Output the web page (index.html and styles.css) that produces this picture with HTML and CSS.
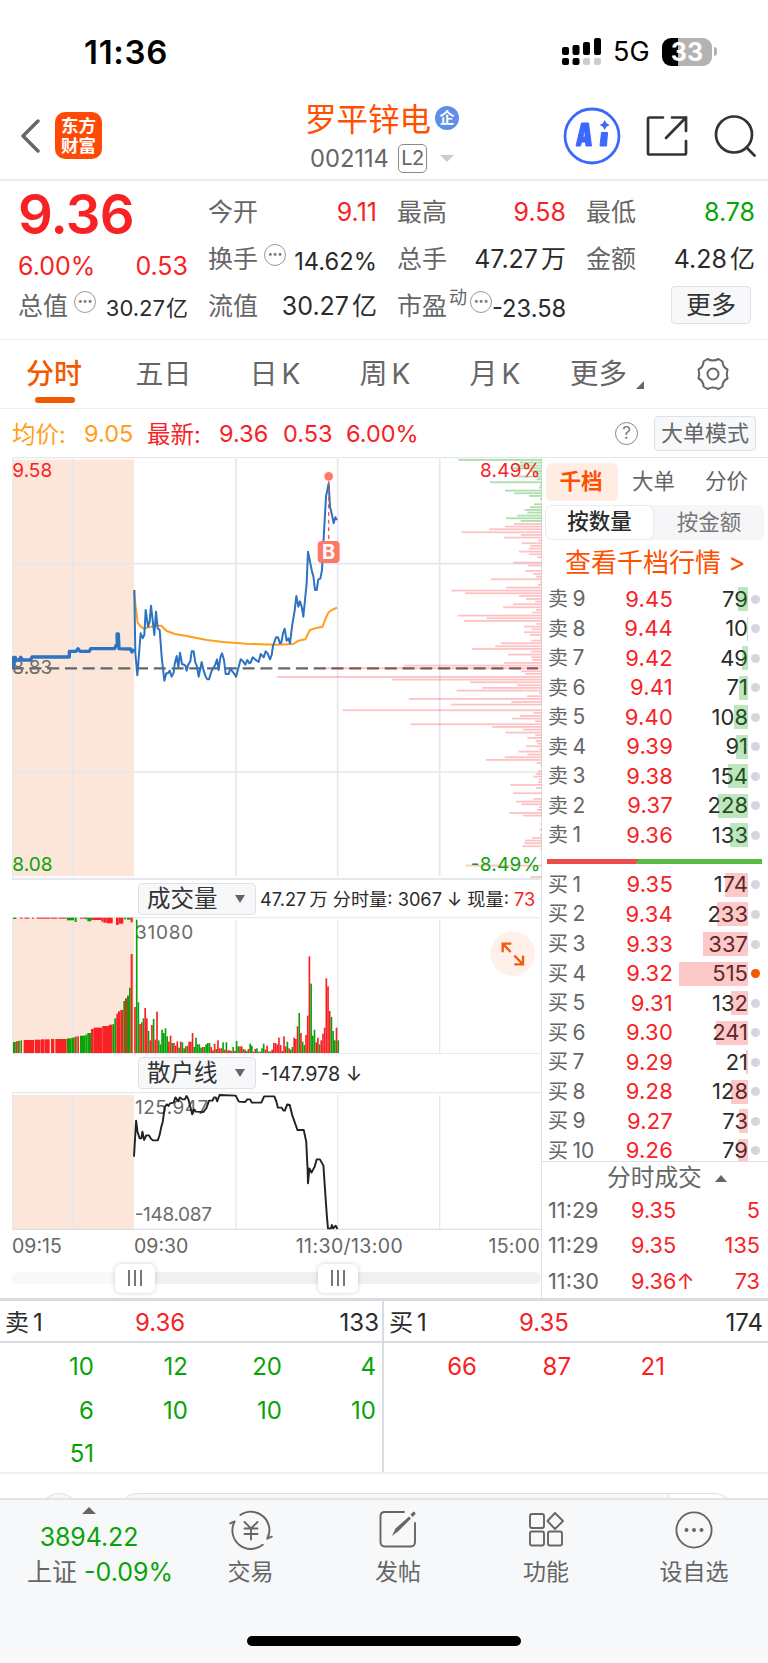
FILE: index.html
```html
<!DOCTYPE html>
<html lang="zh-CN">
<head>
  <meta charset="UTF-8" />
  <meta name="viewport" content="width=device-width, initial-scale=1.0"/>
  <title>罗平锌电 002114</title>
  <link rel="stylesheet" href="styles.css">
</head>
<body>
  <div class="status">
    <span class="clock">11:36</span>
    <svg class="signal" width="39" height="28" viewBox="0 0 39 28">
      <g fill="#000">
        <rect x="0" y="9" width="7" height="8" rx="2"/>
        <rect x="10.5" y="7" width="7" height="10" rx="2"/>
        <rect x="21" y="4" width="7" height="13" rx="2"/>
        <rect x="32" y="0" width="7" height="17" rx="2"/>
        <rect x="0" y="20" width="7" height="7" rx="2"/>
        <rect x="10.5" y="20" width="7" height="7" rx="2"/>
      </g>
      <g fill="#ccc">
        <rect x="21" y="20" width="7" height="7" rx="2"/>
        <rect x="32" y="20" width="7" height="7" rx="2"/>
      </g>
    </svg>
    <span class="net">5G</span>
    <span class="battery">33</span>
    <span class="battery-tip"></span>
  </div>

  <header class="header">
    <svg class="back" width="20" height="34" viewBox="0 0 20 34"><path d="M18 2 L3 17 L18 32" fill="none" stroke="#666" stroke-width="3.4" stroke-linecap="round" stroke-linejoin="round"/></svg>
    <div class="logo">东方<br/>财富</div>
    <div class="title">
      <div class="name">罗平锌电<span class="badge">企</span></div>
      <div class="code"><span>002114</span><span class="l2">L2</span><i class="caret"></i></div>
    </div>
    <svg class="ai" width="58" height="58" viewBox="0 0 58 58">
      <circle cx="29" cy="29" r="27" fill="#fff" stroke="#3b68ff" stroke-width="2.8"/>
      <path d="M13 39 L18.500 16 H25.500 L28.500 39 H23 L22.500 35 H18.500 L17.500 39 Z M19.800 30 H22.200 L21.800 22.500 Z" fill="#3b68ff" fill-rule="evenodd" stroke="#3b68ff" stroke-linejoin="round"/>
      <path d="M38.500 25.500 H44.500 L43.500 39 H37 Z" fill="#3b68ff" stroke="#3b68ff" stroke-linejoin="round"/>
      <path d="M41.700 13 L43.500 16.200 L46.700 18 L43.500 19.800 L41.700 23 L39.900 19.800 L36.700 18 L39.900 16.200 Z" fill="#3b68ff"/>
    </svg>
    <svg class="share" width="42" height="42" viewBox="0 0 42 42"><path d="M17 2.500 H3.500 Q2 2.500 2 4 V38 Q2 39.500 3.500 39.500 H38.500 Q40 39.500 40 38 V26 M26 2.500 H40 V16 M40 2.500 L20 23" fill="none" stroke="#333" stroke-width="2.700" stroke-linecap="round"/></svg>
    <svg class="search" width="43" height="42" viewBox="0 0 43 42"><circle cx="20" cy="19.500" r="18" fill="none" stroke="#333" stroke-width="2.700"/><path d="M32.500 32.500 L40.500 40.500" stroke="#333" stroke-width="2.700" stroke-linecap="round"/></svg>
  </header>

  <section class="quote">
    <div class="col first">
      <div class="price">9.36</div>
      <div class="cell red"><span>6.00%</span><span>0.53</span></div>
      <div class="cell"><label>总值<i class="more-dot">•••</i></label><b class="mid">30.27<u>亿</u></b></div>
    </div>
    <div class="col">
      <div class="cell"><label>今开</label><b class="red">9.11</b></div>
      <div class="cell"><label>换手<i class="more-dot">•••</i></label><b class="mid2">14.62%</b></div>
      <div class="cell"><label>流值</label><b>30.27<u>亿</u></b></div>
    </div>
    <div class="col">
      <div class="cell"><label>最高</label><b class="red">9.58</b></div>
      <div class="cell"><label>总手</label><b>47.27<u>万</u></b></div>
      <div class="cell"><label>市盈<sup>动</sup><i class="more-dot tight">•••</i></label><b class="mid2">-23.58</b></div>
    </div>
    <div class="col">
      <div class="cell"><label>最低</label><b class="green">8.78</b></div>
      <div class="cell"><label>金额</label><b>4.28<u>亿</u></b></div>
      <div class="cell end"><button class="more-btn">更多</button></div>
    </div>
  </section>

  <nav class="tabs">
    <a class="active">分时</a>
    <a>五日</a>
    <a>日<u>K</u></a>
    <a>周<u>K</u></a>
    <a>月<u>K</u></a>
    <a class="more">更多</a>
    <svg class="gear" width="34" height="34" viewBox="0 0 34 34"><g fill="none" stroke="#666" stroke-width="2"><path d="M11.500 2 Q17 5 22.500 2 L26.500 4.500 Q26.500 10 31.500 12.500 Q30 17 31.500 21.500 Q26.500 24 26.500 29.500 L22.500 32 Q17 29 11.500 32 L7.500 29.500 Q7.500 24 2.500 21.500 Q4 17 2.500 12.500 Q7.500 10 7.500 4.500 Z" stroke-linejoin="round"/><circle cx="17" cy="17" r="5.500"/></g></svg>
  </nav>

  <div class="info">
    <span class="avg">均价:</span><span class="avg v1">9.05</span>
    <span class="red v2">最新:</span><span class="red v3">9.36</span><span class="red v4">0.53</span><span class="red">6.00%</span>
    <span class="help">?</span>
    <button class="mode-btn">大单模式</button>
  </div>

  <main class="main">
    <div class="charts">
      <!-- price -->
      <svg class="chart" width="530" height="423" viewBox="36 51 1590 1269">
        <rect x="38" y="59" width="364" height="1250" fill="#fce6da"/>
        <g stroke="#e4e7ed" fill="none">
          <path d="M36 53 H1626" stroke-width="4"/>
          <path d="M38 53 V1318" stroke-width="3"/>
          <path d="M219 57 V1309 M708 57 V1309 M1013 57 V1309 M1319 57 V1309" stroke-width="5"/>
          <path d="M38 371 H1624 M38 996 H1624" stroke-width="5"/>
          <path d="M36 1317 H1626" stroke-width="6"/>
        </g>
        <path d="M35 685 H1614" stroke="#666" stroke-width="7" stroke-dasharray="36 17.300"/>
        <g id="profile"></g>
        <g class="label">
          <text x="37" y="111" class="fill-red">9.58</text>
          <text x="37" y="702">8.83</text>
          <text x="37" y="1293" class="fill-green">8.08</text>
          <text x="1621" y="111" class="fill-red" text-anchor="end" textLength="181">8.49%</text>
          <text x="1621" y="1293" class="fill-green" text-anchor="end" textLength="209">-8.49%</text>
        </g>
        <g fill="none" stroke-linejoin="round">
          <polyline stroke="#ff9f1a" stroke-width="6" points="402,450 407,500 413,548 422,560 432,566 445,562 470,557 484,557 491,564 500,573 525,582 560,588 620,600 670,606 740,611 830,614 880,612 895,602 916,598 922,585 930,570 945,565 968,560 975,540 985,518 995,510 1011,503"/>
          <polyline stroke="#2e72c2" stroke-width="10" points="41,684 41,652 46,652 46,660 58,660 62,652 68,660 92,660 96,651 208,651 208,634 228,634 234,626 240,634 268,634 272,626 344,626 348,616 352,616 351,582 355,582 357,626 392,627 396,636 403,628"/>
          <polyline stroke="#2e72c2" stroke-width="6" points="403,450 406,640 412,706 418,630 422,580 428,594 433,585 437,510 444,560 449,545 453,497 463,585 468,515 473,565 479,570 485,650 493,722 499,700 504,700 509,692 515,710 521,698 524,672 530,648 535,682 540,638 546,672 556,676 560,692 564,676 571,664 575,634 581,634 586,668 590,676 596,710 605,666 611,692 617,710 622,718 627,718 635,692 645,676 651,658 656,690 661,652 666,640 672,660 677,702 686,702 691,685 697,694 702,700 708,710 713,692 722,658 729,664 736,674 742,660 748,670 752,668 758,652 765,658 776,666 782,642 791,652 797,634 803,640 810,658 815,645 819,618 828,592 834,592 840,610 844,608 849,580 854,566 860,602 865,595 870,610 876,560 884,512 889,468 895,500 900,484 905,500 910,530 915,480 920,430 924,335 930,365 936,395 940,408 945,450 950,450 955,418 961,416 966,390 969,330 974,240 978,170 982,150 986,130 990,200 996,225 1001,250 1006,232 1011,240"/>
        </g>
        <path d="M986 124 V300" stroke="#ff4d40" stroke-width="4" stroke-dasharray="12 11"/>
        <circle cx="986" cy="109" r="13" fill="#ff7a66"/>
        <rect x="953" y="303" width="66" height="66" rx="12" fill="#ff7a66"/>
        <text x="986" y="358" class="buy" text-anchor="middle">B</text>
      </svg>

      <div class="sub-head">
        <button class="select">成交量<i class="caret"></i></button>
        <span class="sub-text small">47.27<u>万</u> 分时量: 3067 ↓ 现量: <em class="red">73</em></span>
      </div>

      <!-- volume -->
      <svg class="chart" width="530" height="137" viewBox="36 141 1590 411">
        <rect x="38" y="144" width="364" height="406" fill="#fce6da"/>
        <g stroke="#e4e7ed" fill="none">
          <path d="M36 143 H1626" stroke-width="3"/>
          <path d="M38 143 V550" stroke-width="3"/>
          <path d="M219 150 V550 M708 150 V550 M1013 150 V550 M1319 150 V550" stroke-width="4"/>
          <path d="M36 551 H1626" stroke-width="3"/>
        </g>
        <g class="label"><text x="405" y="207" textLength="175">31080</text></g>
        <g id="volume"></g>
        <circle cx="1538" cy="251" r="67" fill="#fff0e9"/>
        <path d="M1508 247 V221 H1534 M1508 221 L1532 246 M1543 283 H1569 V257 M1543 257 L1568 282" fill="none" stroke="#f25a0c" stroke-width="7"/>
      </svg>

      <div class="sub-head second">
        <button class="select">散户线<i class="caret"></i></button>
        <span class="sub-text">-147.978 ↓</span>
      </div>

      <!-- retail line -->
      <svg class="chart" width="530" height="138" viewBox="36 96 1590 414">
        <rect x="38" y="105" width="364" height="403" fill="#fce6da"/>
        <g stroke="#e4e7ed" fill="none">
          <path d="M36 98 H1626" stroke-width="4"/>
          <path d="M38 98 V508" stroke-width="3"/>
          <path d="M219 105 V508 M708 105 V508 M1013 105 V508 M1319 105 V508" stroke-width="4"/>
          <path d="M36 508 H1626" stroke-width="4" stroke="#dcdfe8"/>
        </g>
        <g class="label">
          <text x="405" y="163" textLength="220">125.947</text>
          <text x="404" y="482" textLength="232">-148.087</text>
        </g>
        <polyline transform="scale(1.0523 1)" fill="none" stroke="#222" stroke-width="5.5" stroke-linejoin="round" points="382,290 388,182 392,215 398,235 403,235 406,215 411,240 417,226 425,226 430,236 436,241 450,241 455,225 460,200 464,185 470,140 476,133 480,138 485,130 495,128 500,112 508,124 513,112 520,118 527,118 532,108 537,118 548,163 553,148 558,155 580,156 588,145 596,122 606,122 610,112 615,112 619,124 626,105 672,107 681,125 699,126 705,118 713,118 718,128 745,128 753,109 782,109 788,125 792,143 803,143 808,152 812,152 819,133 826,135 833,165 838,180 848,210 866,210 873,245 877,330 878,370 882,325 888,338 897,320 903,298 912,298 922,317 928,410 932,470 935,505 944,505 946,495 950,505 957,497 962,507"/>
      </svg>

      <div class="times">
        <span>09:15</span><span>09:30</span><span class="noon">11:30/13:00</span><span class="last">15:00</span>
      </div>
      <div class="slider">
        <div class="handle"><i></i><i></i><i></i></div>
        <div class="handle"><i></i><i></i><i></i></div>
      </div>
    </div>

    <aside class="book">
      <div class="book-tabs"><a class="active">千档</a><a>大单</a><a>分价</a></div>
      <div class="toggle"><a class="active">按数量</a><a>按金额</a></div>
      <a class="all-link">查看千档行情 &gt;</a>
      <div class="levels" id="sell"></div>
      <div class="ratio"></div>
      <div class="levels buy-levels" id="buy"></div>
      <div class="deal-head">分时成交<i class="caret up"></i></div>
      <div class="deals">
        <div><span>11:29</span><b>9.35</b><b>5</b></div>
        <div><span>11:29</span><b>9.35</b><b>135</b></div>
        <div><span>11:30</span><b>9.36↑</b><b>73</b></div>
      </div>
    </aside>
  </main>

  <section class="queue">
    <div class="side">
      <div class="queue-head"><span>卖<u>1</u></span><span class="red">9.36</span><span>133</span></div>
      <div class="orders green">
        <span>10</span><span>12</span><span>20</span><span>4</span>
        <span>6</span><span>10</span><span>10</span><span>10</span>
        <span>51</span>
      </div>
    </div>
    <div class="side">
      <div class="queue-head"><span>买<u>1</u></span><span class="red">9.35</span><span>174</span></div>
      <div class="orders red"><span>66</span><span>87</span><span>21</span></div>
    </div>
  </section>

  <div class="peek">
    <div class="peek-round"></div>
    <div class="peek-pill"><i></i></div>
  </div>

  <footer class="bottom">
    <div class="index">
      <i class="caret up"></i>
      <div class="green">3894.22</div>
      <div>上证<span class="green">-0.09%</span></div>
    </div>
    <a>
      <svg width="44" height="40" viewBox="0 0 44 40"><g fill="none" stroke="#666" stroke-width="1.900" stroke-linecap="round" stroke-linejoin="round"><path d="M11.300 5 A18.500 18.500 0 0 1 38.300 28.700 L42.800 26.700 M38.300 28.700 L39.500 24.500"/><path d="M33.700 34.700 A18.500 18.500 0 0 1 5.700 11.500 L1.200 13.300"/><path d="M15.500 12 L22 18.500 L28.500 12 M22 18.500 V29.500 M15.500 18.500 H28.500 M15.500 24 H28.500"/></g></svg>
      交易
    </a>
    <a>
      <svg width="40" height="40" viewBox="0 0 40 40"><g fill="none" stroke="#666" stroke-width="1.900" stroke-linecap="round"><path d="M26 2 H7 Q2.500 2 2.500 6 V32 Q2.500 36.500 7 36.500 H32.500 Q37 36.500 37 32 V13"/></g><path d="M14 26 L17.500 18.500 L31 6.500 L33 8.500 L20.500 21 Z M32.500 4.500 L35.500 1.500 Q38 2.500 37.500 4 L34.500 7 Z" fill="#666"/></svg>
      发帖
    </a>
    <a>
      <svg width="40" height="40" viewBox="0 0 40 40"><g fill="none" stroke="#666" stroke-width="1.900"><rect x="4" y="4" width="14" height="14" rx="2"/><rect x="4" y="21.5" width="14" height="14" rx="2"/><rect x="22" y="21.5" width="14" height="14" rx="2"/><path d="M29 3 L37 11 L29 19 L21.500 11 Z" stroke-linejoin="round"/></g></svg>
      功能
    </a>
    <a>
      <svg width="40" height="40" viewBox="0 0 40 40"><circle cx="20" cy="20" r="17.600" fill="none" stroke="#666" stroke-width="1.900"/><g fill="#666"><circle cx="12.500" cy="20" r="2"/><circle cx="20" cy="20" r="2"/><circle cx="27.500" cy="20" r="2"/></g></svg>
      设自选
    </a>
    <div class="home-bar"></div>
  </footer>

  <script>
    const RED = '#f82225';
    const GREEN = '#09a309';

    // [name, price, volume, bar width]
    const sells = [
      ['卖9', '9.45', 79, 10], ['卖8', '9.44', 10, 1], ['卖7', '9.42', 49, 6],
      ['卖6', '9.41', 71, 9], ['卖5', '9.40', 108, 14], ['卖4', '9.39', 91, 12],
      ['卖3', '9.38', 154, 20], ['卖2', '9.37', 228, 30], ['卖1', '9.36', 133, 18]
    ];
    const buys = [
      ['买1', '9.35', 174, 23], ['买2', '9.34', 233, 31], ['买3', '9.33', 337, 45],
      ['买4', '9.32', 515, 69], ['买5', '9.31', 132, 17], ['买6', '9.30', 241, 32],
      ['买7', '9.29', 21, 2], ['买8', '9.28', 128, 17], ['买9', '9.27', 73, 9],
      ['买10', '9.26', 79, 10]
    ];

    // [y, left edge] of every price level
    const profile = [
      [60,475],[68,660],[77,648],[85,640],[93,690],[101,700],[110,655],[118,710],[127,570],[135,720],[143,717],
      [152,615],[160,642],[168,687],[177,720],[193,702],[202,690],[210,674],[218,682],[227,652],[235,618],[243,662],
      [252,642],[260,615],[268,567],[277,485],[285,662],[293,612],[302,714],[310,665],[318,690],[326,686],[335,657],
      [343,686],[352,712],[368,639],[377,684],[393,675],[402,699],[410,708],[418,573],[427,720],[435,714],[443,618],
      [452,454],[460,495],[468,657],[477,678],[485,705],[493,639],[502,609],[510,708],[518,697],[527,473],[535,560],
      [543,492],[552,709],[560,672],[568,694],[577,672],[585,690],[594,720],[602,694],[610,602],[619,585],[627,516],
      [635,693],[644,625],[652,693],[660,697],[669,612],[677,311],[685,68],[694,664],[702,675],[711,-70],[719,276],
      [727,510],[736,651],[744,546],[752,470],[760,717],[769,681],[777,327],[786,634],[794,453],[811,128],[819,700],
      [828,660],[836,635],[844,705],[853,332],[861,577],[869,669],[878,616],[886,705],[894,682],[903,707],[911,711],
      [919,678],[927,718],[935,655],[944,682],[952,614],[960,558],[969,710],[977,722],[994,715],[1002,709],[1010,700],
      [1019,717],[1027,714],[1035,631],[1044,708],[1060,639],[1077,700],[1085,647],[1093,665],[1102,717],[1110,711],
      [1119,627],[1127,669],[1152,722],[1169,718],[1185,720],[1194,697],[1202,675],[1210,673],[1219,667],[1227,722],
      [1277,497],[1311,692]
    ];

    // call auction, [x, width, height, colour]
    const auction = [
      [39,8,33,'g'],[47,5,35,'r'],[52,6,36,'g'],[58,3,37,'r'],[62,4,38,'g'],[71,31,39,'r'],[104,18,40,'r'],[123,9,41,'r'],
      [133,16,41,'r'],[153,10,42,'r'],[166,34,42,'r'],[201,13,44,'g'],[214,10,46,'g'],[224,5,49,'r'],[229,2,50,'g'],[232,5,50,'r'],
      [240,16,52,'g'],[256,6,55,'g'],[262,11,60,'g'],[273,8,72,'r'],[281,26,76,'r'],[307,20,81,'r'],[327,11,85,'r'],
      [338,5,87,'g'],[343,6,104,'g'],[349,5,118,'r'],[354,7,125,'r'],[361,9,129,'r'],[370,5,156,'g'],[375,6,164,'r'],
      [381,6,172,'g'],[387,5,196,'g'],[392,6,297,'r']
    ];
    const unmatched = [
      [39,10,4,'g'],[60,8,3,'r'],[74,14,3,'r'],[96,6,3,'r'],[110,40,3,'r'],[152,20,3,'r'],[176,24,3,'r'],[201,21,8,'g'],[224,6,13,'g'],
      [240,20,3,'r'],[256,6,5,'g'],[262,12,11,'g'],[274,30,7,'r'],[304,6,12,'r'],[310,10,15,'r'],[320,18,17,'r'],[348,8,22,'r'],[356,14,18,'r'],
      [372,6,5,'g'],[381,11,6,'g'],[392,6,14,'r']
    ];
    const session = ('r138 g400 g152 r87 r92 g104 r135 r104 g66 r38 r84 g102 r40 r124 g38 g26 g70 g60 g74 g50 ' +
      'r34 r52 g30 r30 r22 r35 g16 r34 g32 g14 r20 g22 r34 r34 r60 g18 g46 g26 g26 g16 ' +
      'r18 g18 g26 g30 g30 r18 r8 r28 g12 r38 r14 r14 g32 r10 g32 r8 r8 r6 g18 r6 ' +
      'g36 g20 r20 r20 g12 r10 g6 r12 g28 g22 r4 r12 g14 g4 r4 g14 g28 r10 r22 g5 ' +
      'g5 r10 r30 r30 r26 r46 r24 r6 r50 r20 g34 r14 g10 g18 r46 r42 r80 g120 r60 g34 ' +
      'g24 r54 r112 r290 g208 g52 g70 r32 r46 g26 r38 r58 r76 r224 r200 r126 g108 g66 g38 r76 g38').split(' ');

    function rect(x, y, w, h, fill) {
      return `<rect x="${x}" y="${y}" width="${w}" height="${h}" fill="${fill}"/>`;
    }

    function renderLevels(id, rows) {
      document.getElementById(id).innerHTML = rows.map(([name, price, vol, w]) => `
        <div class="level">
          <span class="who">${name[0]}<u>${name.slice(1)}</u></span>
          <b>${price}</b>
          <span class="vol"><i class="bar" style="width:${w}px"></i>${vol}</span>
          <i class="dot${vol === 515 ? ' hot' : ''}"></i>
        </div>`).join('');
    }

    function renderProfile() {
      document.getElementById('profile').innerHTML = profile.map(([y, left]) =>
        rect(900 + left, y - 3, 725 - left, 5.5, y < 248 ? 'rgba(20,165,20,.35)' : 'rgba(248,34,37,.27)')).join('');
    }

    function renderVolume() {
      const color = c => c === 'r' ? RED : GREEN;
      let html = auction.map(([x, w, h, c]) => rect(x, 549 - h, w, h, color(c))).join('');
      html += unmatched.map(([x, w, h, c]) => rect(x, 143, w, h, color(c))).join('');
      session.forEach((s, i) => {
        const h = +s.slice(1);
        html += rect((402.5 + i * 5.08).toFixed(2), 549 - h, 5, h, color(s[0]));
      });
      document.getElementById('volume').innerHTML = html;
    }

    renderLevels('sell', sells);
    renderLevels('buy', buys);
    renderProfile();
    renderVolume();
  </script>
</body>
</html>
```
FILE: styles.css
```css
* {
  box-sizing: border-box;
}

body {
  margin: 0;
  width: 768px;
  height: 1663px;
  overflow: hidden;
  background: #fff;
  color: #2b2b2b;
  font-family: Inter, "Noto Sans CJK SC", sans-serif;
  font-size: 24px;
}

i, em, u {
  font-style: normal;
  text-decoration: none;
}

b {
  font-weight: normal;
}

button {
  font-family: inherit;
  color: #333;
  background: #f7f8fa;
  border: 1.5px solid #dfe1e6;
  border-radius: 4px;
  padding: 0;
}

.red { color: #f82225; }
.green { color: #09a309; }

.caret {
  display: inline-block;
  border: 6px solid transparent;
  border-top: 8px solid #666;
  border-bottom: 0;
}

.caret.up {
  border-top: 0;
  border-bottom: 7px solid #666;
}

/* status bar */
.status {
  height: 92px;
  display: flex;
  align-items: center;
  padding: 11px 0 0 84px;
  color: #000;
}

.clock {
  width: 478px;
  font-size: 33px;
  font-weight: 600;
  letter-spacing: .7px;
}

.net {
  margin-left: 12px;
  width: 49px;
  font-size: 27px;
}

.battery {
  width: 50px;
  height: 28px;
  border-radius: 9px;
  background: linear-gradient(90deg, #000 33%, #b3b3b3 33%);
  color: #fff;
  font-size: 25px;
  font-weight: 700;
  line-height: 28px;
  text-align: center;
}

.battery-tip {
  margin-left: 2px;
  width: 3px;
  height: 9px;
  border-radius: 0 3px 3px 0;
  background: #b3b3b3;
}

/* header */
.header {
  height: 89px;
  display: flex;
  align-items: center;
  border-bottom: 2px solid #ececee;
}

.back {
  margin-left: 20px;
}

.logo {
  margin-left: 15px;
  width: 47px;
  height: 47px;
  padding-top: 4px;
  border-radius: 10px;
  background: #ff4a05;
  color: #fff;
  font-size: 17.5px;
  font-weight: 700;
  line-height: 19.5px;
  text-align: center;
}

.title {
  margin-left: 203px;
  width: 258px;
  padding-top: 4px;
}

.name {
  display: flex;
  align-items: center;
  height: 41px;
  color: #ff5000;
  font-size: 31.5px;
}

.badge {
  margin: 2px 0 0 4px;
  width: 24px;
  height: 24px;
  border-radius: 50%;
  background: #5f8ee8;
  color: #fff;
  font-size: 15px;
  font-weight: 700;
  line-height: 23px;
  text-align: center;
}

.code {
  display: flex;
  align-items: center;
  height: 42px;
  padding-left: 5px;
  color: #666;
  font-size: 23.7px;
}

.l2 {
  margin-left: 9px;
  width: 29px;
  height: 29px;
  border: 1.5px solid #8a8a8a;
  border-radius: 5px;
  font-size: 20px;
  letter-spacing: -.5px;
  line-height: 27px;
  text-align: center;
}

.code .caret {
  margin-left: 13px;
  border-width: 7px 7px 0;
  border-top-color: #ccc;
}

.share {
  margin-left: 25px;
}

.search {
  margin-left: 26px;
}

/* quote */
.quote {
  height: 159px;
  display: flex;
  justify-content: space-between;
  padding: 8px 13px 0 18px;
  border-bottom: 1.5px solid #f0f0f2;
}

.col {
  width: 170px;
}

.col:nth-child(n + 2) {
  padding-left: 1px;
}

.price {
  height: 54px;
  color: #f82225;
  font-size: 54.5px;
  font-weight: 600;
  line-height: 51px;
  letter-spacing: -.8px;
}

.cell {
  height: 47px;
  display: flex;
  align-items: center;
  justify-content: space-between;
  font-size: 25px;
  line-height: 47px;
  white-space: nowrap;
}

.first .cell {
  height: 40px;
  padding-top: 6px;
}

.first .cell + .cell {
  height: 47px;
  padding-top: 0;
}

.cell.end {
  justify-content: flex-end;
  padding: 0 4px 4px 0;
}

.cell label {
  display: flex;
  align-items: center;
  color: #666;
}

.cell b { font-size: 25px; }
.cell b.mid { font-size: 22px; padding-top: 4px; }
.cell b.mid2 { font-size: 23.7px; padding-top: 3px; }
.cell u { margin-left: 3px; }
.cell .mid u { margin-left: 1px; }

.cell sup {
  margin: 0 0 17px 2px;
  font-size: 18px;
  line-height: 20px;
}

.more-dot {
  margin: 0 0 10px 6px;
  width: 22px;
  height: 22px;
  border: 1.7px solid #999;
  border-radius: 50%;
  color: #777;
  font-size: 9px;
  line-height: 18px;
  letter-spacing: -.3px;
  text-align: center;
}

.more-dot.tight {
  margin-left: 3px;
}

.more-btn {
  width: 80px;
  height: 38px;
  font-size: 25px;
  line-height: 34px;
}

/* tabs */
.tabs {
  height: 69px;
  display: grid;
  grid-template-columns: 108px 111px 112px 108px 112px 147px 34px;
  align-items: center;
  border-bottom: 1.5px solid #f0f0f2;
  color: #666;
  font-size: 28px;
}

.tabs a {
  position: relative;
  height: 66px;
  line-height: 66px;
  text-align: center;
}

.tabs u {
  margin-left: 4px;
}

.tabs .active {
  color: #f05a00;
  font-weight: 500;
}

.tabs .active::after {
  content: "";
  position: absolute;
  left: 35px;
  bottom: 4px;
  width: 40px;
  height: 6px;
  border-radius: 3px;
  background: #f05a00;
}

.tabs .more {
  padding-right: 71px;
  text-align: right;
  font-size: 28.5px;
}

.tabs .more::after {
  content: "";
  position: absolute;
  right: 54px;
  bottom: 18px;
  border-left: 8px solid transparent;
  border-bottom: 8px solid #666;
}

.gear { margin-left: -2px; }

/* latest price */
.info {
  height: 48px;
  display: flex;
  align-items: center;
  padding: 0 12px 0 12px;
  font-size: 23.5px;
  white-space: nowrap;
}

.avg { color: #ff9f1a; width: 72px; }
.v1 { width: 63px; }
.v2 { width: 72px; }
.v3 { width: 64px; }
.v4 { width: 63px; }

.help {
  margin-left: auto;
  margin-right: 16px;
  width: 23px;
  height: 23px;
  border: 1.6px solid #888;
  border-radius: 50%;
  color: #777;
  font-size: 17px;
  line-height: 20px;
  text-align: center;
}

.mode-btn {
  width: 102px;
  height: 35px;
  color: #666;
  font-size: 22px;
  line-height: 31px;
}

/* main */
.main {
  display: flex;
  height: 844px;
  border-bottom: 3px solid #d9dbe3;
}

.charts {
  width: 542px;
  padding-left: 12px;
  border-right: 1.5px solid #dfe2e8;
}

.chart {
  display: block;
}

.label text {
  fill: #6b6b6b;
  font-size: 57px;
}

.label .fill-red { fill: #f82225; }
.label .fill-green { fill: #09a309; }

.buy {
  fill: #fff;
  font-size: 60px;
  font-weight: 700;
}

.sub-head {
  height: 37px;
  display: flex;
  align-items: center;
  padding-left: 126px;
  white-space: nowrap;
}

.sub-head.second {
  height: 38px;
}

.select {
  display: flex;
  align-items: center;
  justify-content: space-between;
  width: 118px;
  height: 32px;
  padding: 0 10px 0 8px;
  font-size: 23.5px;
  line-height: 28px;
}

.select .caret {
  border-width: 8px 5px 0;
}

.sub-text {
  margin-left: 5px;
  padding-top: 1px;
  font-size: 19.8px;
}

.sub-text.small {
  padding: 0 0 2px;
  margin-left: 4px;
  font-size: 18.2px;
}

.small u { margin-left: 3px; }

.times {
  height: 33px;
  display: grid;
  grid-template-columns: 122px 148px 135px 1fr;
  padding-right: 1px;
  color: #666;
  font-size: 19.5px;
  line-height: 32px;
}

.times .noon { text-align: center; letter-spacing: .4px; }
.times .last { text-align: right; letter-spacing: .3px; }

.slider {
  height: 12px;
  margin-top: 9px;
  display: flex;
  align-items: center;
  gap: 163px;
  padding-left: 103px;
  border-radius: 6px;
  background: linear-gradient(90deg, #f8f8fa 120px, #f0f0f3 120px);
}

.handle {
  display: flex;
  align-items: center;
  justify-content: center;
  gap: 4px;
  width: 40px;
  height: 29px;
  flex: none;
  border-radius: 6px;
  background: #fff;
  box-shadow: 0 0 5px rgba(0,0,0,.18);
}

.handle i {
  width: 2px;
  height: 16px;
  background: #777;
}

/* order book */
.book {
  width: 226px;
  height: 841px;
  padding-top: 5px;
  border-top: 1px solid #e4e7ed;
  overflow: hidden;
}

.book-tabs {
  display: grid;
  grid-template-columns: 72px 73px 73px;
  margin-left: 4px;
  color: #666;
  font-size: 21.5px;
  line-height: 37px;
  height: 38px;
  text-align: center;
}

.book-tabs .active {
  border-radius: 6px;
  background: #ffede4;
  color: #ff5000;
  font-weight: 700;
}

.book-tabs a { text-indent: -2px; }

.toggle {
  display: grid;
  grid-template-columns: 109px 110px;
  margin: 4px 0 0 3px;
  width: 219px;
  height: 35px;
  border-radius: 7px;
  background: #f6f6f9;
  color: #777;
  font-size: 21.5px;
  line-height: 34px;
  text-align: center;
}

.toggle .active {
  border: 1.5px solid #ebebef;
  border-radius: 7px;
  background: #fff;
  color: #2b2b2b;
  font-weight: 500;
  line-height: 31px;
}

.all-link {
  display: block;
  height: 44px;
  padding-left: 23px;
  color: #ff5000;
  font-size: 26px;
  line-height: 46px;
}

.level {
  display: grid;
  grid-template-columns: 55px 70px 75px 12px;
  align-items: center;
  height: 29.55px;
  margin-left: 6px;
  font-size: 22px;
  line-height: 29px;
}

.who { color: #666; font-size: 20px; }
.who u { margin-left: 4.5px; font-size: 21px; }

.level b, .deals b {
  color: #f82225;
  text-align: right;
}

.level b { letter-spacing: .2px; }

.vol {
  position: relative;
  text-align: right;
}

.bar {
  position: absolute;
  right: 0;
  top: 2.5px;
  height: 24px;
  background: rgba(20,165,20,.28);
}

.buy-levels .bar {
  background: rgba(248,34,37,.25);
}

.dot {
  justify-self: end;
  width: 9px;
  height: 9px;
  border-radius: 50%;
  background: #d3d6de;
}

.dot.hot { background: #f05a00; }

.ratio {
  width: 215px;
  height: 5px;
  margin: 9px 0 6px 5px;
  background: linear-gradient(120deg, #ee4b4b 42%, #58bb43 42%);
}

.buy-levels {
  height: 291px;
  overflow: hidden;
}

.deal-head {
  height: 32px;
  border-top: 1.5px solid #dcdfe8;
  padding-left: 65px;
  color: #666;
  font-size: 23.7px;
  line-height: 31px;
}

.deal-head .caret {
  margin-left: 13px;
  vertical-align: 4px;
}

.deals div {
  display: grid;
  grid-template-columns: 83px 60px 69px;
  height: 35.5px;
  margin-left: 6px;
  color: #666;
  font-size: 21.7px;
  line-height: 35px;
}

.deals b:nth-child(2) { text-align: left; }

/* queue */
.queue {
  height: 173px;
  display: flex;
  border-bottom: 2px solid #efeff1;
}

.side {
  width: 384px;
  border-right: 2px solid #d9dbe3;
}

.side + .side {
  border-right: 0;
}

.queue-head {
  display: grid;
  grid-template-columns: 130px 120px 1fr;
  height: 42px;
  padding: 0 3px 0 5px;
  border-bottom: 2px solid #d9dbe3;
  line-height: 43px;
}

.side + .side .queue-head { padding-right: 5px; }

.queue-head span:last-child { text-align: right; }

.queue-head u { margin-left: 4px; }

.orders {
  display: grid;
  grid-template-columns: repeat(4, 94px);
  grid-auto-rows: 43.7px;
  line-height: 47px;
  text-align: right;
}

.side + .side .orders { margin-left: -1px; }

/* covered by the bottom bar */
.peek {
  height: 24px;
  display: flex;
  align-items: flex-start;
  padding: 19px 0 0 39px;
  overflow: hidden;
}

.peek-round {
  width: 40px;
  height: 40px;
  border: 1.5px solid #dcdfe3;
  border-radius: 50%;
  background: #f7f8fa;
}

.peek-pill {
  margin-left: 39px;
  width: 616px;
  height: 40px;
  flex: none;
  border: 1.5px solid #dcdfe3;
  border-radius: 20px;
  background: linear-gradient(90deg, #f7f8fa 550px, #fff 550px);
}

.peek-pill i {
  display: block;
  width: 550px;
  height: 40px;
  border-right: 1.5px solid #dcdfe3;
}

.bottom {
  display: grid;
  grid-template-columns: 177px 147px 148px 148px 148px;
  grid-template-rows: 136px 10px;
  height: 165px;
  border-top: 2px solid #e3e4e8;
  background: #f7f8fa;
  color: #666;
  font-size: 23px;
}

.bottom a {
  display: flex;
  flex-direction: column;
  align-items: center;
  padding-top: 10px;
  line-height: 44px;
}

.bottom svg { display: block; flex: none; }

.index {
  padding-left: 20px;
  padding-top: 7px;
  width: 178px;
  font-size: 25px;
  line-height: 35px;
  text-align: center;
  white-space: nowrap;
}

.index .caret {
  display: block;
  width: 14px;
  margin: 0 auto 6px 62px;
  border-width: 0 7px 7px;
}

.index div:nth-child(2) { margin-right: 20px; letter-spacing: -.1px; }
.index div:nth-child(3) { text-align: left; margin-left: 7px; }
.index span { margin-left: 7px; }

.home-bar {
  grid-column: 1 / -1;
  justify-self: center;
  width: 274px;
  height: 10px;
  border-radius: 5px;
  background: #000;
}
```
